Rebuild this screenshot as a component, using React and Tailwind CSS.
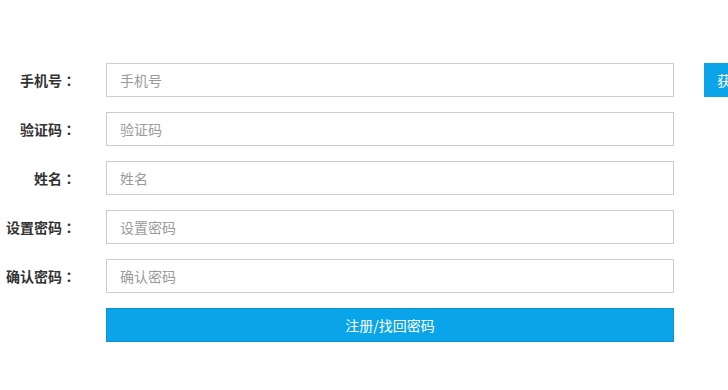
import React from "react";

function Row({ label, placeholder, children }) {
  return (
    <div className="flex items-center h-[34px]">
      <div className="w-[76px] shrink-0 text-right text-[14px] font-bold text-[#333]">
        {label}
        <span className="font-['Noto_Sans_CJK_JP','Noto_Sans_CJK_SC',sans-serif]">：</span>
      </div>
      <div className="ml-[30px] w-[568px] shrink-0 h-[34px] border border-[#cccccc] bg-white flex items-center px-[13px]">
        <input
          className="w-full outline-none text-[14px] text-[#333] placeholder:text-[#9a9a9a] bg-transparent font-['Noto_Sans_CJK_SC','Noto_Sans',sans-serif]"
          placeholder={placeholder}
        />
      </div>
      {children}
    </div>
  );
}

export default function App() {
  return (
    <div className="w-[728px] h-[390px] overflow-hidden bg-white font-['Noto_Sans_CJK_SC','Noto_Sans',sans-serif]">
      <div className="pt-[63px] flex flex-col gap-[15px] w-[820px]">
        <Row label="手机号" placeholder="手机号">
          <button className="ml-[30px] shrink-0 w-[100px] h-[34px] bg-[#09a5e8] text-white text-[14px] text-left pl-[13px] font-['Noto_Sans_CJK_SC','Noto_Sans',sans-serif]">
            获取验证码
          </button>
        </Row>
        <Row label="验证码" placeholder="验证码" />
        <Row label="姓名" placeholder="姓名" />
        <Row label="设置密码" placeholder="设置密码" />
        <Row label="确认密码" placeholder="确认密码" />
        <div className="flex h-[34px]">
          <button className="ml-[106px] w-[568px] h-[34px] bg-[#09a5e8] border border-[#0b93cf] text-white text-[14px] font-['Noto_Sans_CJK_SC','Noto_Sans',sans-serif]">
            注册/找回密码
          </button>
        </div>
      </div>
    </div>
  );
}
